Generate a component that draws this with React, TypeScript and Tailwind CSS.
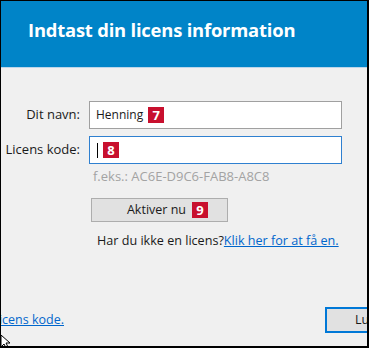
import React from "react";

function Badge({ n }: { n: string }) {
  return (
    <span className="inline-flex h-[16px] w-[16px] items-center justify-center bg-[#c8102e] text-[13px] font-bold leading-none text-white">
      {n}
    </span>
  );
}

export default function App() {
  const font = { fontFamily: '"Open Sans", "Noto Sans", sans-serif' };
  return (
    <div
      className="relative h-[348px] w-[369px] overflow-hidden border-t border-l border-r-2 border-b-2 border-black bg-[#f0f0f0] text-[13px] text-[#1a1a1a]"
      style={font}
    >
      <header className="h-[67px] border-b border-[#bcd6ea] bg-[#0084c8] pl-[27px] pt-[17px]">
        <h1 className="text-[18.4px] font-bold leading-[24px] tracking-[-0.2px] text-white">Indtast din licens information</h1>
      </header>

      <div className="mt-[33px] grid grid-cols-[79px_253px] gap-x-[9px]">
        <label className="flex h-[28px] items-center justify-end whitespace-nowrap">Dit navn:</label>
        <div className="flex h-[28px] items-center gap-[5px] border border-[#a0a0a0] bg-white pl-[6px]">
          <span className="text-[12px]">Henning</span>
          <Badge n="7" />
        </div>

        <label className="mt-[7px] flex h-[28px] items-center justify-end whitespace-nowrap">Licens kode:</label>
        <div className="mt-[7px] flex h-[28px] items-center gap-[5px] border border-[#2f80d0] bg-white pl-[7px]">
          <span className="h-[15px] w-[1px] bg-black" />
          <Badge n="8" />
        </div>

        <div />
        <div className="mt-[4px] pl-[4px] leading-[16px] text-[#a3a3a3]">f.eks.: AC6E-D9C6-FAB8-A8C8</div>

        <div />
        <button className="mt-[14px] ml-[2px] flex h-[24px] w-[137px] items-center justify-center gap-[6px] border border-[#adadad] bg-[#e1e1e1] pl-[16px]">
          <span className="text-[12.5px]">Aktiver nu</span>
          <Badge n="9" />
        </button>

        <div />
        <div className="mt-[11px] whitespace-nowrap pl-[8px] text-[12.6px] leading-[16px]">
          Har du ikke en licens?<a className="text-[#0066cc] underline">Klik her for at få en.</a>
        </div>
      </div>

      <div className="mt-[58px] flex items-center justify-between">
        <div className="flex w-[63px] justify-end overflow-hidden whitespace-nowrap">
          <a className="text-[12.5px] text-[#0066cc] underline">Glemt licens kode.</a>
        </div>
        <button className="mr-[-40px] flex h-[26px] w-[82px] items-center border-2 border-[#0078d7] bg-[#e1e1e1] pl-[28px] text-[12.5px]">
          Luk
        </button>
      </div>

      <svg className="absolute left-0 top-[334px]" width="10" height="14" viewBox="0 0 10 14">
        <path d="M0 0 L0 12 L3 9 L5 13 L7 12 L5 8 L9 8 Z" fill="white" stroke="black" strokeWidth="1" />
      </svg>
    </div>
  );
}
